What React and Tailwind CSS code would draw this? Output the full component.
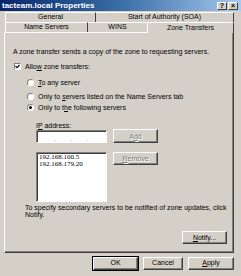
import React from 'react';

const font = { fontFamily: '"Liberation Sans", Arial, sans-serif' };

function Btn({ children, disabled, isDefault, className = '' }) {
  return (
    <div
      className={
        'flex items-center justify-center bg-[#d4d0c8] border border-t-white border-l-white border-r-[#404040] border-b-[#404040] shadow-[inset_-1px_-1px_0_#808080] text-[7px] ' +
        (isDefault ? 'outline outline-1 outline-black ' : '') +
        (disabled ? 'text-[#808080] [text-shadow:1px_1px_0_#fff] ' : 'text-black ') +
        className
      }
    >
      {children}
    </div>
  );
}

function Radio({ checked }) {
  return (
    <div className="w-[7px] h-[7px] rounded-full bg-white border border-t-[#808080] border-l-[#808080] border-r-white border-b-white flex items-center justify-center shrink-0">
      {checked && <div className="w-[3px] h-[3px] rounded-full bg-black" />}
    </div>
  );
}

export default function App() {
  return (
    <div className="w-[241px] h-[276px] bg-[#d4d0c8] overflow-hidden flex flex-col text-black" style={font}>
      {/* title bar */}
      <div className="h-[11px] flex items-center justify-between pl-[2px] pr-[3px] bg-gradient-to-r from-[#0a246a] via-[#3a6ea5] to-[#a6caf0]">
        <span className="text-white font-bold text-[8px] leading-none">tacteam.local Properties</span>
        <div className="flex gap-[1px]">
          <div className="w-[10px] h-[8px] bg-[#d4d0c8] border border-t-white border-l-white border-r-[#404040] border-b-[#404040] text-[7px] font-bold leading-none flex items-center justify-center">?</div>
          <div className="w-[10px] h-[8px] bg-[#d4d0c8] border border-t-white border-l-white border-r-[#404040] border-b-[#404040] text-[7px] font-bold leading-none flex items-center justify-center">×</div>
        </div>
      </div>

      {/* tabs */}
      <div className="mt-[1px] ml-[5px] flex h-[10px]">
        <div className="w-[91px] border-t border-l border-t-white border-l-white border-r border-r-[#404040] flex items-center justify-center text-[7px]">General</div>
        <div className="w-[138px] border-t border-t-white border-r border-r-[#404040] flex items-center justify-center text-[7px]">Start of Authority (SOA)</div>
      </div>
      <div className="ml-[5px] flex h-[10px]">
        <div className="w-[83px] border-t border-l border-t-white border-l-white border-r border-r-[#404040] flex items-center justify-center text-[7px]">Name Servers</div>
        <div className="w-[59px] border-t border-t-white flex items-center justify-center text-[7px]">WINS</div>
        <div className="w-[87px] border-t border-l border-t-white border-l-white border-r border-r-[#404040] flex items-center justify-center text-[7px] relative z-10 bg-[#d4d0c8] -mb-[1px]">Zone Transfers</div>
      </div>

      {/* panel */}
      <div className="ml-[4px] w-[230px] h-[221px] border border-t-white border-l-white border-r-[#404040] border-b-[#404040] shadow-[inset_-1px_-1px_0_#808080] flex flex-col text-[7px] leading-[7px]">
        <div className="mt-[13px] ml-[8px] h-[10px] flex items-center">A zone transfer sends a copy of the zone to requesting servers.</div>

        <div className="mt-[5px] ml-[9px] h-[10px] flex items-center gap-[4px]">
          <div className="w-[7px] h-[7px] bg-white border border-t-[#808080] border-l-[#808080] border-r-white border-b-white flex items-center justify-center">
            <svg width="5" height="5" viewBox="0 0 5 5"><path d="M0.5 2.2 L2 3.7 L4.6 0.8" stroke="black" strokeWidth="1.2" fill="none" /></svg>
          </div>
          <span>Allo<u>w</u> zone transfers:</span>
        </div>

        <div className="mt-[6px] ml-[22px] h-[10px] flex items-center gap-[4px]">
          <Radio />
          <span><u>T</u>o any server</span>
        </div>
        <div className="mt-[4px] ml-[22px] h-[10px] flex items-center gap-[4px]">
          <Radio />
          <span>Only to <u>s</u>ervers listed on the Name Servers tab</span>
        </div>
        <div className="mt-[1px] ml-[22px] h-[10px] flex items-center gap-[4px]">
          <Radio checked />
          <span>Only to t<u>h</u>e following servers</span>
        </div>

        <div className="mt-[9px] ml-[31px] h-[8px] flex items-center">
          <span>I<u>P</u> address:</span>
        </div>

        <div className="ml-[31px] h-[14px] flex items-start gap-[6px]">
          <div className="mt-[1px] w-[71px] h-[13px] bg-white border border-t-[#808080] border-l-[#808080] border-r-white border-b-white shadow-[inset_1px_1px_0_#404040] flex items-center justify-around px-[10px] pt-[4px]">
            <span className="text-[#808080]">.</span>
            <span className="text-[#808080]">.</span>
            <span className="text-[#808080]">.</span>
          </div>
          <Btn disabled className="w-[45px] h-[14px]">A<u>d</u>d</Btn>
        </div>

        <div className="mt-[9px] ml-[31px] flex items-start gap-[6px]">
          <div className="w-[71px] h-[50px] bg-white border border-t-[#808080] border-l-[#808080] border-r-white border-b-white shadow-[inset_1px_1px_0_#404040] pl-[2px] pt-[1px] text-[7px] leading-[6.5px]" style={{ fontFamily: '"Liberation Serif", "Times New Roman", serif' }}>
            <div>192.168.100.5</div>
            <div>192.168.179.20</div>
          </div>
          <Btn disabled className="w-[45px] h-[13px]"><span><u>R</u>emove</span></Btn>
        </div>

        <div className="mt-[2px] ml-[20px] leading-[7px] w-[205px]">
          To specify secondary servers to be notified of zone updates, click Notify.
        </div>

        <div className="mt-[13px] mr-[6px] self-end">
          <Btn className="w-[45px] h-[13px]"><span><u>N</u>otify...</span></Btn>
        </div>
      </div>

      {/* bottom buttons */}
      <div className="mt-[4px] ml-[93px] flex gap-[5px]">
        <Btn isDefault className="w-[45px] h-[13px]">OK</Btn>
        <Btn className="w-[40px] h-[13px]">Cancel</Btn>
        <Btn className="w-[46px] h-[13px]"><span><u>A</u>pply</span></Btn>
      </div>
    </div>
  );
}
